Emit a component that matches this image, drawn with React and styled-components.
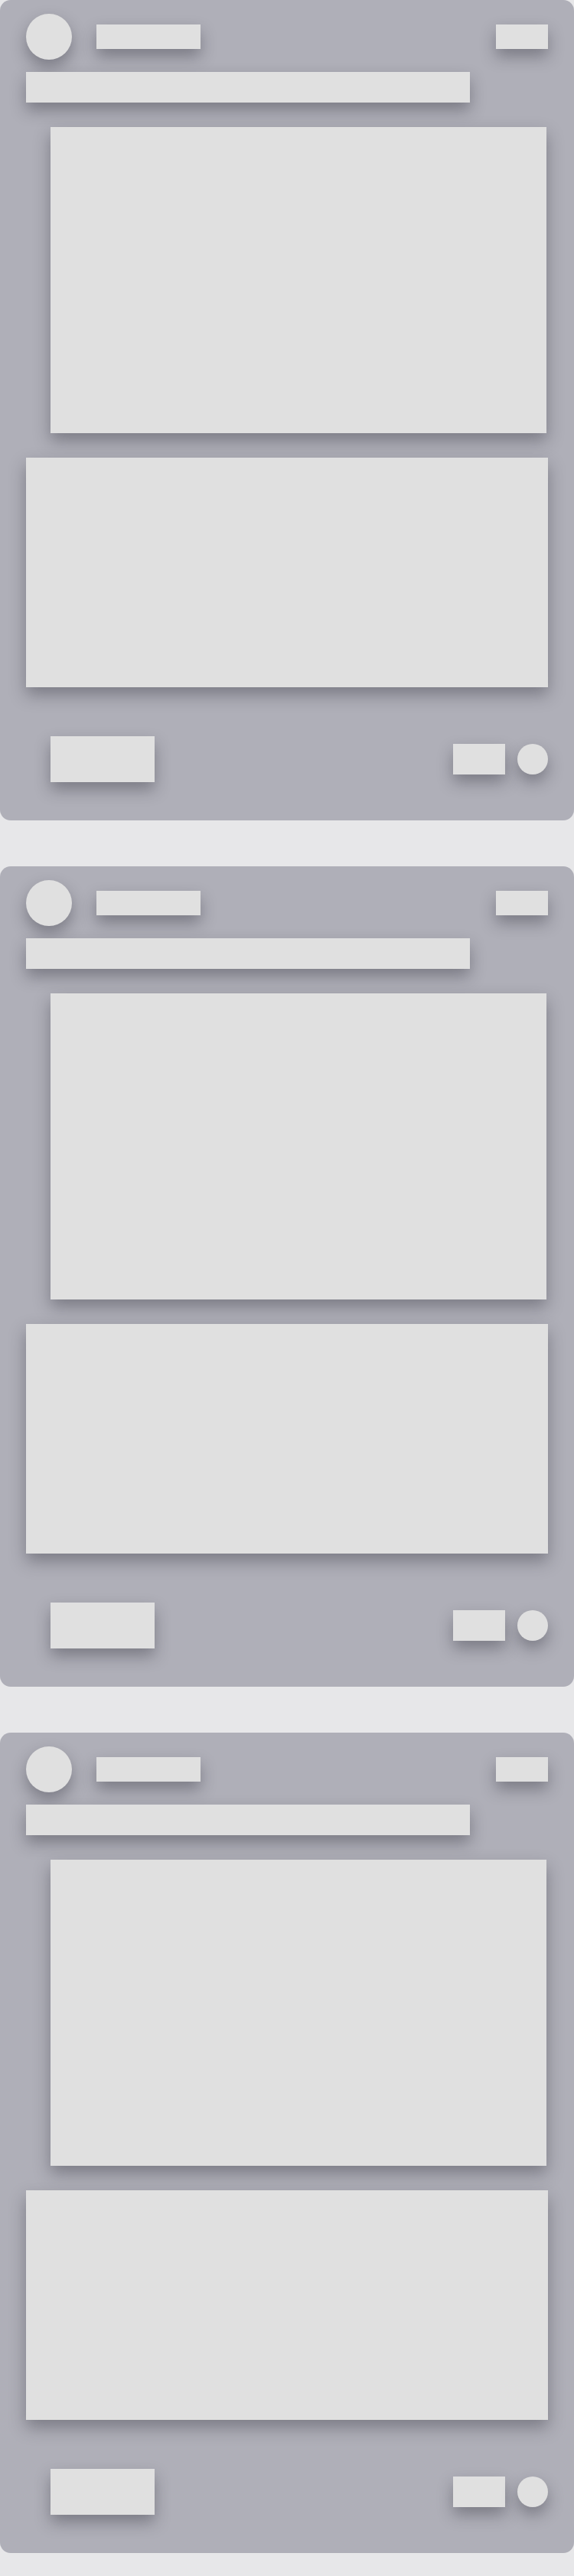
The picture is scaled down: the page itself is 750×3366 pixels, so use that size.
import styled, { createGlobalStyle } from "styled-components";

const GlobalStyle = createGlobalStyle`
  html, body {
    margin: 0;
    padding: 0;
    background-color: #e7e7e9;
    font-family: "Liberation Sans", Arial, sans-serif;
  }
`;

const FeedList = styled.div`
  width: 750px;
  padding-bottom: 30px;

  display: flex;
  flex-direction: column;
  gap: 60px;
`;

const CardBlock = styled.div`
  width: 100%;
  height: 1072px;
  box-sizing: border-box;
  padding: 18px 34px 50px 34px;
  border-radius: 14px;
  background-color: #afafb8;

  display: flex;
  flex-direction: column;
`;

const Header = styled.div`
  width: 100%;
  height: 60px;

  display: flex;
  align-items: center;
`;

const Bone = styled.div`
  width: ${(props) => props.w}px;
  height: ${(props) => props.h}px;
  flex-shrink: 0;
  background-color: #e0e0e0;
  border-radius: ${(props) => (props.round ? "50%" : "0")};
  box-shadow: 0 10px 20px rgba(30, 30, 40, 0.35);
`;

const Spacer = styled.div`
  flex: 1;
`;

const TitleBone = styled(Bone)`
  margin-top: 16px;
`;

const MediaBone = styled(Bone)`
  margin: 32px 0 0 32px;
`;

const ContentBone = styled(Bone)`
  margin-top: 32px;
`;

const Footer = styled.div`
  width: 100%;
  height: 60px;
  margin-top: 64px;

  display: flex;
  align-items: center;
`;

const FooterRight = styled.div`
  display: flex;
  align-items: center;
  gap: 16px;
`;

const SkeletonCard = () => {
  return (
    <CardBlock>
      <Header>
        <Bone w={60} h={60} round />
        <Bone w={136} h={32} style={{ marginLeft: 32 }} />
        <Spacer />
        <Bone w={68} h={32} />
      </Header>
      <TitleBone w={580} h={40} />
      <MediaBone w={648} h={400} />
      <ContentBone w={682} h={300} />
      <Footer>
        <Bone w={136} h={60} style={{ marginLeft: 32 }} />
        <Spacer />
        <FooterRight>
          <Bone w={68} h={40} />
          <Bone w={40} h={40} round />
        </FooterRight>
      </Footer>
    </CardBlock>
  );
};

const App = () => {
  return (
    <>
      <GlobalStyle />
      <FeedList>
        <SkeletonCard />
        <SkeletonCard />
        <SkeletonCard />
      </FeedList>
    </>
  );
};

export default App;
